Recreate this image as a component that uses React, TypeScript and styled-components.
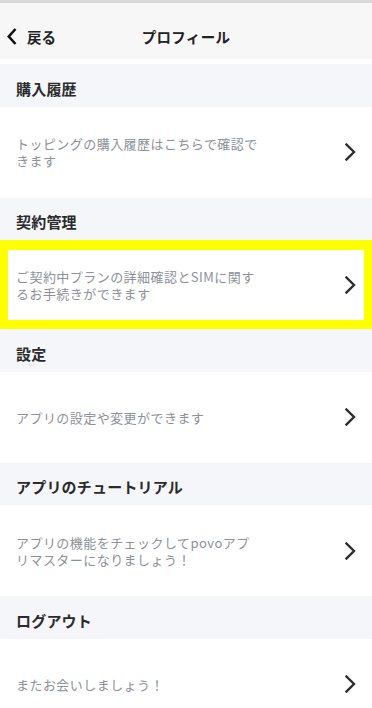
import React from "react";
import styled, { createGlobalStyle } from "styled-components";

const Global = createGlobalStyle`
  html, body { margin: 0; padding: 0; background: #ffffff; }
  body { font-family: "Noto Sans CJK JP", "Noto Sans", sans-serif; -webkit-font-smoothing: antialiased; }
  * { box-sizing: border-box; }
`;

const Page = styled.div`
  width: 372px;
  min-height: 708px;
  background: #ffffff;
  display: flex;
  flex-direction: column;
  overflow: hidden;
`;

const StatusStrip = styled.div`
  height: 3px;
  background: #d8d8d8;
`;

const NavBar = styled.header`
  height: 56px;
  padding-top: 10px;
  background: #f7f7f7;
  display: grid;
  grid-template-columns: 1fr auto 1fr;
  align-items: center;
`;

const BackButton = styled.button`
  justify-self: start;
  display: flex;
  align-items: center;
  gap: 10px;
  padding: 0 0 0 7px;
  border: none;
  background: none;
  font-family: inherit;
  font-size: 14.5px;
  font-weight: 700;
  color: #222;
`;

const NavTitle = styled.h1`
  margin: 0;
  font-size: 14.5px;
  font-weight: 700;
  color: #222;
  letter-spacing: 0.3px;
`;

const Spacer = styled.div`
  height: 5px;
  background: #ffffff;
`;

const SectionHeader = styled.h2`
  margin: 0;
  height: 42.5px;
  padding: 6px 16px 0;
  display: flex;
  align-items: center;
  background: #f5f6f9;
  font-size: 15px;
  font-weight: 700;
  color: #2b2b2b;
  letter-spacing: 0.2px;
`;

const Row = styled.div<{ $highlight?: boolean }>`
  height: ${(p) => (p.$highlight ? "89px" : "91px")};
  display: flex;
  align-items: center;
  justify-content: space-between;
  background: #ffffff;
  border-style: solid;
  border-color: #ffff00;
  border-width: ${(p) => (p.$highlight ? "10px 8px 9px" : "0")};
  padding: 0 ${(p) => (p.$highlight ? "8px" : "16px")};
`;

const RowText = styled.p`
  margin: 0;
  font-size: 13px;
  line-height: 17px;
  letter-spacing: 0.45px;
  color: #8d9198;
  white-space: pre-line;
`;

const Chevron = () => (
  <svg width="11" height="18" viewBox="0 0 11 18" aria-hidden="true">
    <polyline points="1.5,1.5 9,9 1.5,16.5" fill="none" stroke="#2e2e2e" strokeWidth="2.4" strokeLinecap="square" />
  </svg>
);

const BackChevron = () => (
  <svg width="10" height="17" viewBox="0 0 10 17" aria-hidden="true">
    <polyline points="8.5,1 1.8,8.5 8.5,16" fill="none" stroke="#111" strokeWidth="2.6" />
  </svg>
);

const sections = [
  { title: "購入履歴", text: "トッピングの購入履歴はこちらで確認で\nきます" },
  { title: "契約管理", text: "ご契約中プランの詳細確認とSIMに関す\nるお手続きができます", highlight: true },
  { title: "設定", text: "アプリの設定や変更ができます" },
  { title: "アプリのチュートリアル", text: "アプリの機能をチェックしてpovoアプ\nリマスターになりましょう！" },
  { title: "ログアウト", text: "またお会いしましょう！" },
];

export default function App() {
  return (
    <Page>
      <Global />
      <StatusStrip />
      <NavBar>
        <BackButton>
          <BackChevron />
          戻る
        </BackButton>
        <NavTitle>プロフィール</NavTitle>
        <div />
      </NavBar>
      <Spacer />
      {sections.map((s) => (
        <section key={s.title}>
          <SectionHeader>{s.title}</SectionHeader>
          <Row $highlight={s.highlight}>
            <RowText>{s.text}</RowText>
            <Chevron />
          </Row>
        </section>
      ))}
    </Page>
  );
}
